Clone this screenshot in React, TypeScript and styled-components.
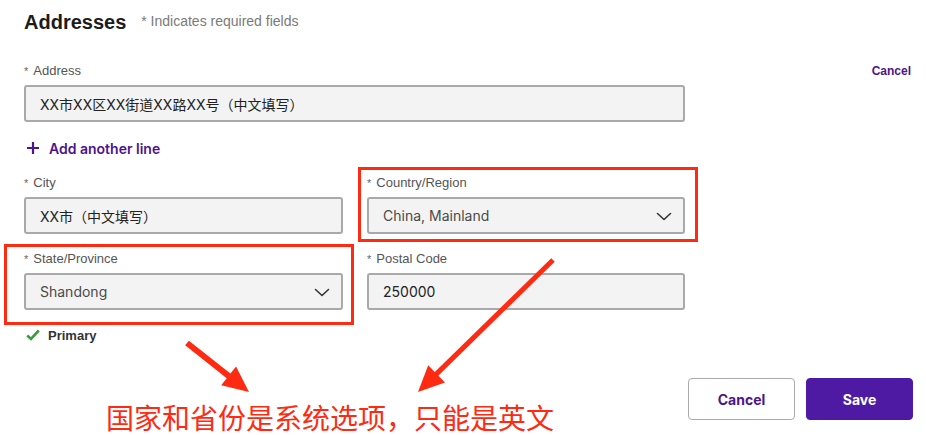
import React from "react";
import styled, { createGlobalStyle } from "styled-components";

const GlobalStyle = createGlobalStyle`
  html, body { margin: 0; padding: 0; background: #ffffff; }
  body { font-family: "Liberation Sans", Arial, sans-serif; color: #222; }
  * { box-sizing: border-box; }
`;

const Page = styled.div`
  position: relative;
  width: 926px;
  height: 435px;
  padding: 10px 13px 0 24px;
  overflow: hidden;
`;

const Header = styled.div`
  display: flex;
  align-items: flex-start;
  gap: 15px;
  height: 24px;
`;

const Title = styled.h1`
  margin: 0;
  font-size: 20px;
  line-height: 24px;
  font-weight: 700;
  color: #1c1c1c;
`;

const Hint = styled.span`
  margin-top: 3px;
  font-size: 14px;
  line-height: 16px;
  color: #7a7a7a;
`;

const LabelRow = styled.div`
  display: flex;
  justify-content: space-between;
  align-items: center;
  margin-top: 29px;
  padding-right: 2px;
`;

const Label = styled.label`
  display: block;
  font-size: 13px;
  line-height: 16px;
  color: #555;
  margin-bottom: 6px;
`;

const LabelInRow = styled(Label)`
  margin-bottom: 0;
`;

const Star = styled.span`
  font-size: 11px;
  margin-right: 5px;
  color: #666;
`;

const LinkButton = styled.button`
  border: none;
  background: none;
  padding: 0;
  font-family: "Liberation Sans", Arial, sans-serif;
  font-size: 12px;
  font-weight: 700;
  color: #4d148c;
  cursor: pointer;
`;

const Box = styled.div<{ $wide?: boolean; $muted?: boolean }>`
  display: flex;
  align-items: center;
  justify-content: space-between;
  width: ${(p) => (p.$wide ? "661px" : "100%")};
  height: 37px;
  margin-top: ${(p) => (p.$wide ? "6px" : "0")};
  padding: 0 7px 0 14px;
  background: #f3f3f3;
  border: 2px solid #a9a9a9;
  border-radius: 3px;
  font-family: "Inter", "Liberation Sans", "Noto Sans CJK SC", sans-serif;
  font-size: 14px;
  color: ${(p) => (p.$muted ? "#4a4a4a" : "#222")};
`;

const AddLine = styled.button`
  display: flex;
  align-items: center;
  gap: 10px;
  margin-top: 16px;
  height: 20px;
  padding: 0 0 0 3px;
  border: none;
  background: none;
  font-family: "Inter", "Liberation Sans", sans-serif;
  font-size: 14px;
  font-weight: 600;
  color: #4d148c;
`;

const Grid = styled.div`
  display: grid;
  grid-template-columns: 319px 318px;
  column-gap: 24px;
  row-gap: 17px;
  margin-top: 17px;
`;

const Field = styled.div`
  display: flex;
  flex-direction: column;
`;

const Primary = styled.div`
  display: flex;
  align-items: center;
  gap: 8px;
  margin-top: 17px;
  padding-left: 2px;
  height: 16px;
  font-size: 13px;
  font-weight: 700;
  color: #333;
`;

const Actions = styled.div`
  display: flex;
  justify-content: flex-end;
  gap: 11px;
  margin-top: 35px;
`;

const Button = styled.button<{ $primary?: boolean }>`
  width: 107px;
  height: 42px;
  border-radius: 4px;
  font-family: "Inter", "Liberation Sans", sans-serif;
  font-size: 14px;
  font-weight: 700;
  cursor: pointer;
  border: 1px solid ${(p) => (p.$primary ? "#4e19a3" : "#aaaaaa")};
  background: ${(p) => (p.$primary ? "#4e19a3" : "#ffffff")};
  color: ${(p) => (p.$primary ? "#ffffff" : "#4d148c")};
`;

const Highlight = styled.div<{ $x: number; $y: number; $w: number; $h: number }>`
  position: absolute;
  left: ${(p) => p.$x}px;
  top: ${(p) => p.$y}px;
  width: ${(p) => p.$w}px;
  height: ${(p) => p.$h}px;
  border: 3px solid #ff2a12;
  pointer-events: none;
`;

const Overlay = styled.svg`
  position: absolute;
  left: 0;
  top: 0;
  pointer-events: none;
`;

const Note = styled.div`
  position: absolute;
  left: 106px;
  top: 402px;
  font-family: "Noto Sans CJK SC", sans-serif;
  font-size: 28px;
  line-height: 30px;
  color: #ff2a12;
  white-space: nowrap;
`;

const Chevron = () => (
  <svg width="24" height="24" viewBox="0 0 24 24" fill="none">
    <path d="M5.5 9.5 12 15.5 18.5 9.5" stroke="#333" strokeWidth="1.6" strokeLinecap="round" strokeLinejoin="round" />
  </svg>
);

const Plus = () => (
  <svg width="12" height="12" viewBox="0 0 12 12">
    <path d="M6 0v12M0 6h12" stroke="#4d148c" strokeWidth="2.2" />
  </svg>
);

const Check = () => (
  <svg width="14" height="12" viewBox="0 0 14 12" fill="none">
    <path d="M1.2 6.5 5 10 12.8 1.5" stroke="#3d9a3d" strokeWidth="2.6" />
  </svg>
);

const Arrow = ({ x1, y1, x2, y2, w }: { x1: number; y1: number; x2: number; y2: number; w: number }) => {
  const dx = x2 - x1;
  const dy = y2 - y1;
  const len = Math.hypot(dx, dy);
  const ux = dx / len;
  const uy = dy / len;
  const hl = 26;
  const hw = 12;
  const bx = x2 - ux * hl;
  const by = y2 - uy * hl;
  const px = -uy;
  const py = ux;
  const pts = `${x2},${y2} ${bx + px * hw},${by + py * hw} ${bx - px * hw},${by - py * hw}`;
  return (
    <g>
      <line x1={x1} y1={y1} x2={bx + ux * 4} y2={by + uy * 4} stroke="#ff2a12" strokeWidth={w} />
      <polygon points={pts} fill="#ff2a12" />
    </g>
  );
};

export default function App() {
  return (
    <>
      <GlobalStyle />
      <Page>
        <Header>
          <Title>Addresses</Title>
          <Hint>* Indicates required fields</Hint>
        </Header>

        <LabelRow>
          <LabelInRow><Star>*</Star>Address</LabelInRow>
          <LinkButton>Cancel</LinkButton>
        </LabelRow>
        <Box $wide>XX市XX区XX街道XX路XX号（中文填写）</Box>

        <AddLine>
          <Plus />
          Add another line
        </AddLine>

        <Grid>
          <Field>
            <Label><Star>*</Star>City</Label>
            <Box>XX市（中文填写）</Box>
          </Field>
          <Field>
            <Label><Star>*</Star>Country/Region</Label>
            <Box $muted>
              China, Mainland
              <Chevron />
            </Box>
          </Field>
          <Field>
            <Label><Star>*</Star>State/Province</Label>
            <Box $muted>
              Shandong
              <Chevron />
            </Box>
          </Field>
          <Field>
            <Label><Star>*</Star>Postal Code</Label>
            <Box>250000</Box>
          </Field>
        </Grid>

        <Primary>
          <Check />
          Primary
        </Primary>

        <Actions>
          <Button>Cancel</Button>
          <Button $primary>Save</Button>
        </Actions>

        <Highlight $x={358} $y={167} $w={340} $h={75} />
        <Highlight $x={4} $y={244} $w={350} $h={81} />
        <Overlay width="926" height="435" viewBox="0 0 926 435">
          <Arrow x1={187} y1={343} x2={249} y2={392} w={6} />
          <Arrow x1={553} y1={260} x2={418} y2={392} w={5} />
        </Overlay>
        <Note>国家和省份是系统选项，只能是英文</Note>
      </Page>
    </>
  );
}
